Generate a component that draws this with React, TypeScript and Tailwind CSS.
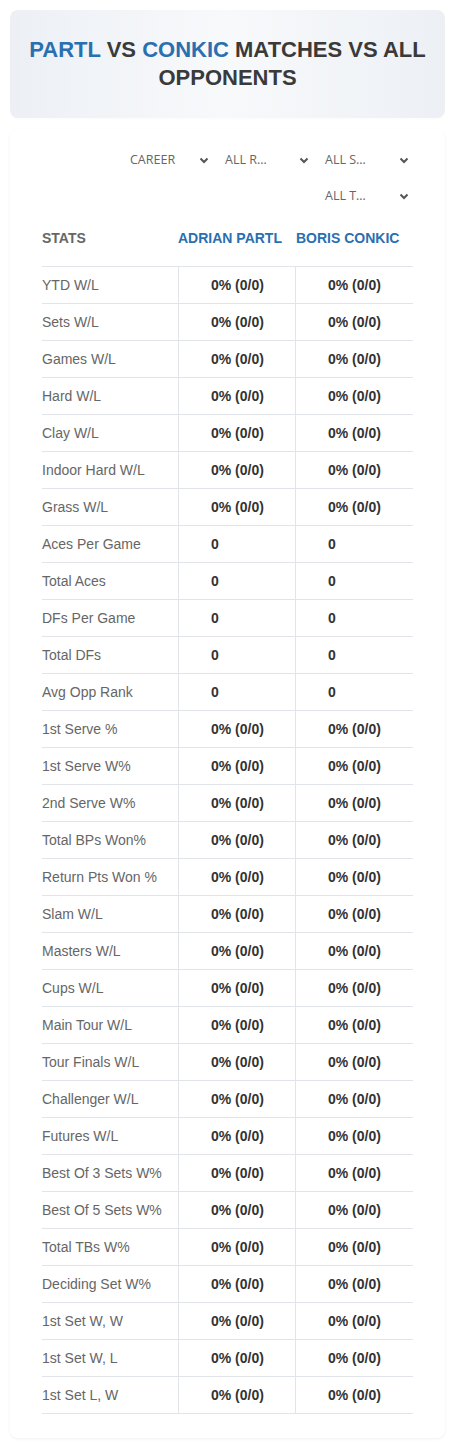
import React from "react";

const rows: [string, string][] = [
  ["YTD W/L", "0% (0/0)"],
  ["Sets W/L", "0% (0/0)"],
  ["Games W/L", "0% (0/0)"],
  ["Hard W/L", "0% (0/0)"],
  ["Clay W/L", "0% (0/0)"],
  ["Indoor Hard W/L", "0% (0/0)"],
  ["Grass W/L", "0% (0/0)"],
  ["Aces Per Game", "0"],
  ["Total Aces", "0"],
  ["DFs Per Game", "0"],
  ["Total DFs", "0"],
  ["Avg Opp Rank", "0"],
  ["1st Serve %", "0% (0/0)"],
  ["1st Serve W%", "0% (0/0)"],
  ["2nd Serve W%", "0% (0/0)"],
  ["Total BPs Won%", "0% (0/0)"],
  ["Return Pts Won %", "0% (0/0)"],
  ["Slam W/L", "0% (0/0)"],
  ["Masters W/L", "0% (0/0)"],
  ["Cups W/L", "0% (0/0)"],
  ["Main Tour W/L", "0% (0/0)"],
  ["Tour Finals W/L", "0% (0/0)"],
  ["Challenger W/L", "0% (0/0)"],
  ["Futures W/L", "0% (0/0)"],
  ["Best Of 3 Sets W%", "0% (0/0)"],
  ["Best Of 5 Sets W%", "0% (0/0)"],
  ["Total TBs W%", "0% (0/0)"],
  ["Deciding Set W%", "0% (0/0)"],
  ["1st Set W, W", "0% (0/0)"],
  ["1st Set W, L", "0% (0/0)"],
  ["1st Set L, W", "0% (0/0)"],
];

const Chevron = () => (
  <svg width="10" height="7" viewBox="0 0 10 7" className="shrink-0">
    <path d="M1.5 1.5 L5 5 L8.5 1.5" fill="none" stroke="#555" strokeWidth="2" />
  </svg>
);

const Select = ({ label, width }: { label: string; width: string }) => (
  <div className={`flex items-center justify-between h-9 pr-[4px] ${width}`}>
    <span className="text-[12.5px] text-[#666]">{label}</span>
    <Chevron />
  </div>
);

const App = () => {
  return (
    <div className="min-h-screen bg-white px-[10px] pt-[10px] font-['Liberation_Sans',Arial,sans-serif]">
      {/* Title card */}
      <div className="h-[108px] rounded-lg bg-linear-to-r from-[#ecf0f5] via-[#f8f9fb] to-[#ecf0f5] shadow-[0_1px_2px_rgba(0,0,0,0.02)] flex items-center justify-center px-4">
        <h1 className="text-center text-[22px] leading-[28px] font-bold uppercase text-[#3a3a3a]">
          <span className="text-[#2a6fb0]">Partl</span> vs <span className="text-[#2a6fb0]">Conkic</span>{" "}
          matches vs all opponents
        </h1>
      </div>

      {/* Stats card */}
      <div className="mt-3 rounded-lg bg-white shadow-[0_1px_3px_rgba(0,0,0,0.06)] px-8 pt-3 pb-6">
        <div className="flex flex-wrap justify-end gap-x-3 font-['Open_Sans',sans-serif]">
          <Select label="CAREER" width="w-[83px]" />
          <Select label="ALL R…" width="w-[88px]" />
          <Select label="ALL S…" width="w-[88px]" />
          <Select label="ALL T…" width="w-[88px]" />
        </div>

        <div className="grid grid-cols-[136px_117px_1fr] h-[53px] pt-4 border-b border-[#e1e4e8] text-[14px] leading-4 font-bold uppercase">
          <div className="text-[#666]">Stats</div>
          <div className="text-[#2a6fb0]">Adrian Partl</div>
          <div className="text-[#2a6fb0] pl-px">Boris Conkic</div>
        </div>

        {rows.map(([label, value]) => (
          <div
            key={label}
            className="grid grid-cols-[136px_117px_1fr] h-[37px] border-b border-[#e1e4e8] text-[14px]"
          >
            <div className="flex items-center text-[#666]">{label}</div>
            <div className="flex items-center pl-8 border-l border-[#e1e4e8] font-bold text-[#333]">
              {value}
            </div>
            <div className="flex items-center pl-8 border-l border-[#e1e4e8] font-bold text-[#333]">
              {value}
            </div>
          </div>
        ))}
      </div>
    </div>
  );
};

export default App;
